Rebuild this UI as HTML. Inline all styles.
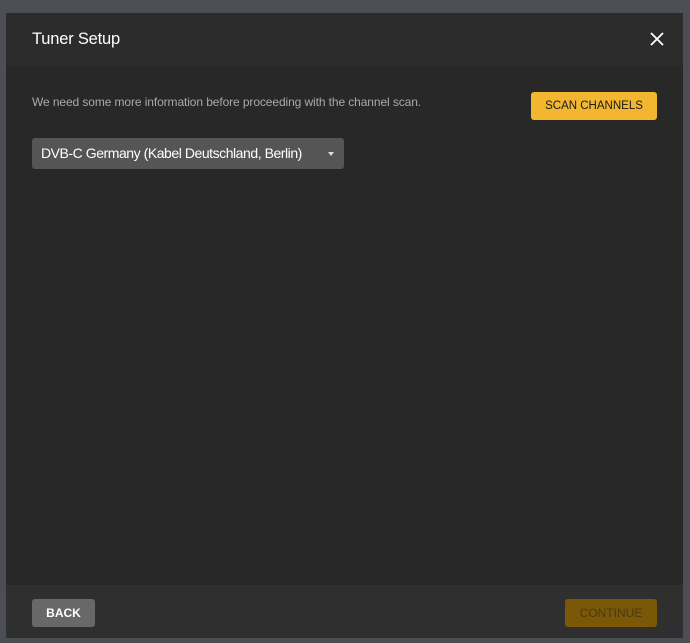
<!DOCTYPE html>
<html><head><style>
html,body{margin:0;padding:0;width:690px;height:643px;overflow:hidden;background:#4b4e53;font-family:"Liberation Sans",sans-serif;}
.modal{position:absolute;left:6px;top:13px;width:677px;height:625px;background:#282828;}
.hdr{position:absolute;left:0;top:0;width:677px;height:53px;background:#2c2c2c;}
.title{position:absolute;left:26px;top:17px;font-size:16.5px;color:#fff;letter-spacing:-0.2px;}
.x{position:absolute;left:644px;top:19px;}
.msg{position:absolute;left:26px;top:82px;font-size:12px;color:#a9a9a9;letter-spacing:-0.1px;}
.scan{position:absolute;left:525px;top:79px;width:126px;height:28px;background:#f2b630;border-radius:3px;color:#1a1a1a;font-size:11.5px;text-align:center;line-height:28px;}
.sel{position:absolute;left:26px;top:125px;width:312px;height:31px;background:#555;border-radius:3px;color:#fff;font-size:14px;line-height:31px;}
.sel span{position:absolute;left:9px;letter-spacing:-0.45px;}
.arrow{position:absolute;left:296px;top:14px;width:0;height:0;border-left:3.5px solid transparent;border-right:3.5px solid transparent;border-top:4px solid #ddd;}
.ftr{position:absolute;left:0;top:572px;width:677px;height:53px;background:#2f2f2f;}
.back{position:absolute;left:26px;top:14px;width:63px;height:28px;background:#686868;border-radius:3px;color:#fff;font-size:12px;text-align:center;line-height:28px;font-weight:bold;}
.cont{position:absolute;left:559px;top:14px;width:92px;height:28px;background:#7a5808;border-radius:3px;color:#4a3a10;font-size:12px;text-align:center;line-height:28px;}
</style></head><body>
<div class="modal">
<div class="hdr"><div class="title">Tuner Setup</div>
<svg class="x" width="14" height="14" viewBox="0 0 14 14"><path d="M1 1L13 13M13 1L1 13" stroke="#fff" stroke-width="1.8"/></svg></div>
<div class="msg">We need some more information before proceeding with the channel scan.</div>
<div class="scan">SCAN CHANNELS</div>
<div class="sel"><span>DVB-C Germany (Kabel Deutschland, Berlin)</span><div class="arrow"></div></div>
<div class="ftr"><div class="back">BACK</div><div class="cont">CONTINUE</div></div>
</div>
</body></html>
